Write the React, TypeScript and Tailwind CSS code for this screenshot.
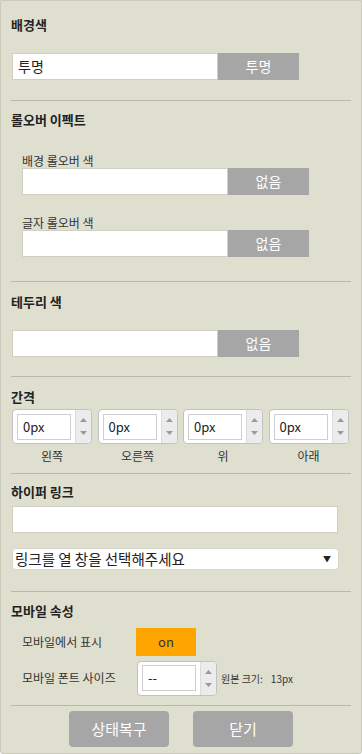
import React from 'react';

const font = { fontFamily: '"Noto Sans CJK KR", "Noto Sans", sans-serif' };

const Title: React.FC<{ text: string; className?: string }> = ({ text, className = '' }) => (
  <div className={`h-[16px] leading-[16px] text-[13px] font-bold text-[#222] ${className}`}>{text}</div>
);

const Divider: React.FC<{ className?: string }> = ({ className = '' }) => (
  <div className={`h-px bg-[#b9b9aa] ${className}`} />
);

const ColorRow: React.FC<{ value?: string; btn: string; className?: string }> = ({ value = '', btn, className = '' }) => (
  <div className={`flex h-[27px] ${className}`}>
    <div className="w-[206px] h-full bg-white border border-[#cfcfc4] px-[5px] text-[14px] leading-[25px] text-[#222]">{value}</div>
    <div className="w-[81px] h-full bg-[#a6a6a6] text-white text-[14px] leading-[27px] text-center">{btn}</div>
  </div>
);

const Arrows: React.FC = () => (
  <div className="w-[16px] h-full bg-[#ececec] border-l border-[#dcdcdc] rounded-r-[4px] flex flex-col items-center justify-center gap-[9px]">
    <svg width="7" height="4" viewBox="0 0 7 4"><path d="M3.5 0L7 4H0z" fill="#9a9a9a" /></svg>
    <svg width="7" height="4" viewBox="0 0 7 4"><path d="M0 0h7L3.5 4z" fill="#9a9a9a" /></svg>
  </div>
);

const SpinBox: React.FC<{ value: string }> = ({ value }) => (
  <div className="w-[80px] h-[35px] bg-white border border-[#c2c2c2] rounded-[4px] flex">
    <div className="flex-1 flex items-center pl-[4px]">
      <div className="w-[54px] h-[26px] border border-[#cfcfcf] text-[13px] leading-[24px] pl-[5px] text-[#222]">{value}</div>
    </div>
    <Arrows />
  </div>
);

const App: React.FC = () => {
  return (
    <div style={font} className="w-[362px] h-[754px] bg-[#dfdfd0] border border-[#cbcbbc] rounded-b-[3px] px-[10px] overflow-hidden">
      <Title text="배경색" className="mt-[16px]" />
      <ColorRow value="투명" btn="투명" className="mt-[20px] ml-[1px]" />
      <Divider className="mt-[20px]" />

      <Title text="롤오버 이펙트" className="mt-[11px]" />
      <div className="ml-[11px] mt-[26px] h-[14px] leading-[14px] text-[12px] text-[#333]">배경 롤오버 색</div>
      <ColorRow btn="없음" className="ml-[11px]" />
      <div className="ml-[11px] mt-[21px] h-[14px] leading-[14px] text-[12px] text-[#333]">글자 롤오버 색</div>
      <ColorRow btn="없음" className="ml-[11px]" />
      <Divider className="mt-[24px]" />

      <Title text="테두리 색" className="mt-[12px]" />
      <ColorRow btn="없음" className="mt-[20px] ml-[1px]" />
      <Divider className="mt-[19px]" />

      <Title text="간격" className="mt-[12px]" />
      <div className="mt-[4px] ml-[1px] grid grid-cols-4 w-[337px] gap-x-[5px]">
        {['0px', '0px', '0px', '0px'].map((v, i) => (
          <SpinBox key={i} value={v} />
        ))}
        {['왼쪽', '오른쪽', '위', '아래'].map((l) => (
          <div key={l} className="w-[80px] mt-[5px] h-[14px] leading-[14px] text-[12px] text-center text-[#333]">{l}</div>
        ))}
      </div>
      <Divider className="mt-[10px]" />

      <Title text="하이퍼 링크" className="mt-[10px]" />
      <div className="mt-[6px] ml-[1px] w-[326px] h-[27px] bg-white border border-[#cfcfc4]" />
      <div className="mt-[15px] ml-[1px] w-[327px] h-[22px] bg-white rounded-[4px] border border-[#d6d6cc] flex items-center justify-between pl-[2px] pr-[7px]">
        <span className="text-[14.5px] text-[#222] leading-[20px]">링크를 열 창을 선택해주세요</span>
        <span className="text-[8px] text-[#222]">▼</span>
      </div>
      <Divider className="mt-[21px]" />

      <Title text="모바일 속성" className="mt-[11px]" />
      <div className="mt-[9px] flex items-center h-[28px]">
        <div className="ml-[11px] w-[114px] text-[12px] text-[#333]">모바일에서 표시</div>
        <div className="w-[60px] h-[28px] bg-[#ffa500] text-[13px] text-[#333] leading-[28px] text-center">on</div>
      </div>
      <div className="mt-[4px] flex items-center h-[36px]">
        <div className="ml-[11px] w-[115px] text-[12px] text-[#333]">모바일 폰트 사이즈</div>
        <SpinBox value="--" />
        <div className="ml-[4px] text-[10px] text-[#333] flex gap-[8px]">
          <span>원본 크기:</span>
          <span>13px</span>
        </div>
      </div>
      <Divider className="mt-[9px]" />

      <div className="mt-[5px] flex justify-center gap-[24px]">
        <div className="w-[100px] h-[36px] bg-[#a6a6a6] rounded-[4px] text-white text-[15px] leading-[36px] text-center">상태복구</div>
        <div className="w-[100px] h-[36px] bg-[#a6a6a6] rounded-[4px] text-white text-[15px] leading-[36px] text-center">닫기</div>
      </div>
    </div>
  );
};

export default App;
